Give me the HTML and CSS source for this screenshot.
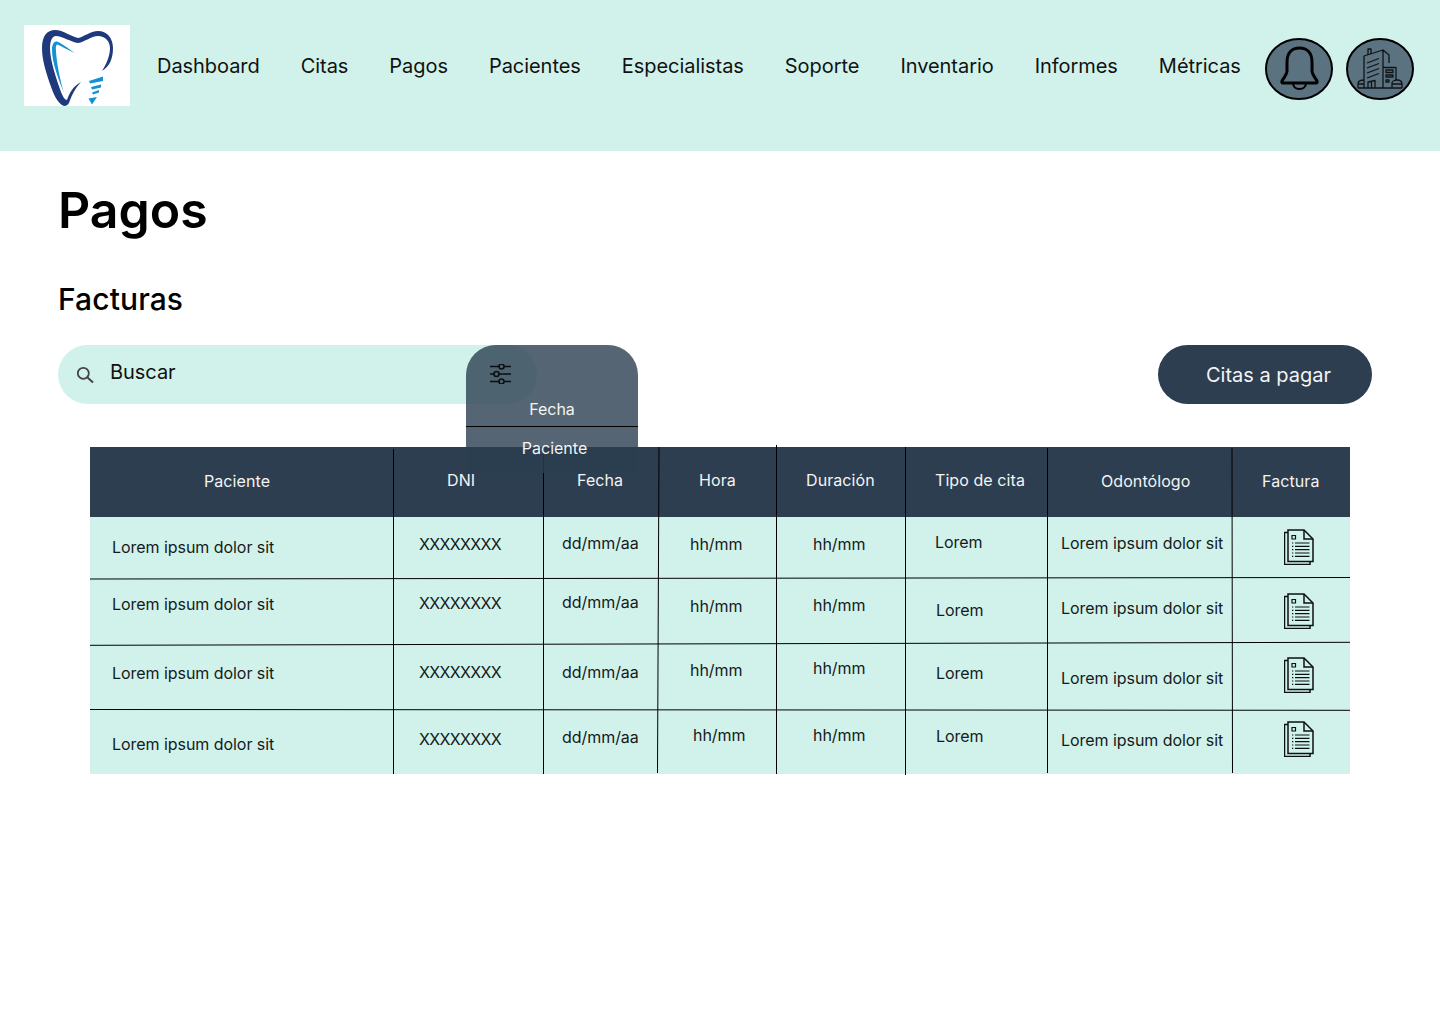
FILE: index.html
```html
<!DOCTYPE html>
<html lang="es">
<head>
<meta charset="utf-8">
<title>Pagos</title>
<link rel="stylesheet" href="styles.css">
</head>
<body>
<svg class="defs" width="0" height="0" aria-hidden="true">
  <symbol id="doc" viewBox="0 0 30 36">
    <path class="doc-line" d="M4 3.5H.5V35.5H26V32.5"/>
    <path class="doc-line" d="M4 1H20L29 10V32.5H4Z"/>
    <path class="doc-line" d="M20 1V10H29"/>
    <path class="doc-thin" d="M8 6.5H11.5V10H8ZM11 14H25.5M11 17.3H25.5M11 20.7H25.5M11 24H25.5M11 27.3H25.5M8 14H9.3M8 17.3H9.3M8 20.7H9.3M8 24H9.3M8 27.3H9.3"/>
  </symbol>
</svg>

<header class="topbar">
  <div class="logo">
    <svg viewBox="24 25 106 81" width="106" height="81" aria-hidden="true">
      <path class="logo-navy" d="M64 106C57 103 54 95 50 84C46 72 42 60 42 48C42 36 47 30 55 30C63 30 72 37 78 38C84 37 90 31 98 31C107 31 113 38 113 48C113 58 110 66 102 71C106 65 110 56 110 48C110 41 105 36 98 36C91 36 85 42 78 43C71 42 62 36 56 36C52 36 50 41 50 48C50 60 56 78 61 92C63 97 65 100 67 100C69 94 73 86 81 82C75 88 71 97 69 103C68 105 66 106 64 106Z"/>
      <path class="logo-blue" d="M64 93C58 78 52 62 52 50C52 44 54 41 57 41.5C63 44 70 50 75 53C68 50 62 46.500 57.500 44.500C56 44.500 55.500 47 56 51C56.500 62 60 80 64 93Z"/>
      <path class="logo-blue" d="M89 81L103 76.5V81L90 83.5ZM91 87L101 84.5V87.5L92 89.5ZM92 92.5L99 90V92.5L93 94.5ZM88.5 98.5L97 97L92 104.5Z"/>
    </svg>
  </div>
  <nav class="nav">
    <a>Dashboard</a><a>Citas</a><a>Pagos</a><a>Pacientes</a><a>Especialistas</a><a>Soporte</a><a>Inventario</a><a>Informes</a><a>Métricas</a>
  </nav>
  <div class="actions">
    <svg class="round" viewBox="0 0 68 62" width="68" height="62" aria-hidden="true">
      <ellipse class="round-bg" cx="34" cy="31" rx="33" ry="30"/>
      <path class="bell" d="M22 33V24C22 15 27 10 34.5 10C42 10 47 15 47 24V33C47 37 50 39 52 43C52.5 44.5 52 45 51 45H18C17 45 16.5 44.5 17 43C19 39 22 37 22 33Z"/>
      <path class="bell-thin" d="M28 45C28 49 31 51 34.5 51C38 51 41 49 41 45"/>
    </svg>
    <svg class="round" viewBox="0 0 68 62" width="68" height="62" aria-hidden="true">
      <ellipse class="round-bg" cx="34" cy="31" rx="33" ry="30"/>
      <path class="build" d="M18 50V18L37 12V50M37 12L43 17V25M22 17V11H25V16M21 25L33 20.5M21 30L33 25.5M21 35L33 30.5M21 40L33 35.5M22 50V44L29 42.5V50M25.5 43.5V50M37 29.5H50V42M40 32H47V34.5H40ZM40 37H47V39H40ZM40 42H43V44H40ZM12 50H56M12 50V46C12 43 15 42 18 42M12 46H18M46 50V45C46 43 49 42 51 42C54 42 56 43 56 46V50M46 46H56"/>
    </svg>
  </div>
</header>

<main class="page">
  <h1 class="title">Pagos</h1>
  <h2 class="subtitle">Facturas</h2>

  <div class="toolbar">
    <div class="search">
      <svg class="search-icon" viewBox="0 0 20 20" width="20" height="20" aria-hidden="true">
        <circle class="lens" cx="8.3" cy="8.3" r="5.5"/>
        <path class="lens-handle" d="M12.5 12.5L18 17.5"/>
      </svg>
      <span class="search-text">Buscar</span>
      <div class="filter-menu">
        <svg class="filter-icon" viewBox="0 0 24 20" width="24" height="20" aria-hidden="true">
          <path class="slider" d="M1 2.5H10M15 2.5H22M1 10H5M10 10H22M1 17.5H10M15 17.5H22"/>
          <circle class="slider" cx="12.5" cy="2.5" r="2.5"/>
          <circle class="slider" cx="7.5" cy="10" r="2.5"/>
          <circle class="slider" cx="12.5" cy="17.5" r="2.5"/>
        </svg>
        <div class="menu-item menu-first">Fecha</div>
        <div class="menu-item menu-second">Paciente</div>
      </div>
    </div>
    <a class="cta">Citas a pagar</a>
  </div>

  <section class="table">
    <div class="th th1">Paciente</div>
    <div class="th th2">DNI</div>
    <div class="th th3">Fecha</div>
    <div class="th th4">Hora</div>
    <div class="th th5">Duración</div>
    <div class="th th6">Tipo de cita</div>
    <div class="th th7">Odontólogo</div>
    <div class="th th8">Factura</div>

    <div class="td c1 y20">Lorem ipsum dolor sit</div>
    <div class="td c2 y17">XXXXXXXX</div>
    <div class="td c3 y16">dd/mm/aa</div>
    <div class="td c4 y17">hh/mm</div>
    <div class="td c5 y17">hh/mm</div>
    <div class="td c6 y15 shift-l">Lorem</div>
    <div class="td c7 y16">Lorem ipsum dolor sit</div>
    <div class="td c8 y13"><svg class="doc" width="30" height="36"><use href="#doc"/></svg></div>

    <div class="td c1 y15">Lorem ipsum dolor sit</div>
    <div class="td c2 y14">XXXXXXXX</div>
    <div class="td c3 y13">dd/mm/aa</div>
    <div class="td c4 y17">hh/mm</div>
    <div class="td c5 y16">hh/mm</div>
    <div class="td c6 y21">Lorem</div>
    <div class="td c7 y19">Lorem ipsum dolor sit</div>
    <div class="td c8 y15"><svg class="doc" width="30" height="36"><use href="#doc"/></svg></div>

    <div class="td c1 y18">Lorem ipsum dolor sit</div>
    <div class="td c2 y17">XXXXXXXX</div>
    <div class="td c3 y17">dd/mm/aa</div>
    <div class="td c4 y15">hh/mm</div>
    <div class="td c5 y13">hh/mm</div>
    <div class="td c6 y18">Lorem</div>
    <div class="td c7 y23">Lorem ipsum dolor sit</div>
    <div class="td c8 y13"><svg class="doc" width="30" height="36"><use href="#doc"/></svg></div>

    <div class="td c1 y24">Lorem ipsum dolor sit</div>
    <div class="td c2 y19">XXXXXXXX</div>
    <div class="td c3 y17">dd/mm/aa</div>
    <div class="td c4 y15 shift-r">hh/mm</div>
    <div class="td c5 y15">hh/mm</div>
    <div class="td c6 y16">Lorem</div>
    <div class="td c7 y20">Lorem ipsum dolor sit</div>
    <div class="td c8 y12"><svg class="doc" width="30" height="36"><use href="#doc"/></svg></div>

    <svg class="rules" viewBox="0 0 1260 327" aria-hidden="true">
      <path d="M303.5 2V327M453.5 0V327M569 0L567.5 326M686.5 -2V327M815.5 0V328M957.5 1V326M1142 1L1142.5 326"/>
      <path d="M0 132L1260 130.5M0 198.3L1260 195.3M0 262.5L1260 263.3"/>
    </svg>
  </section>
</main>
</body>
</html>
```
FILE: styles.css
```css
* { box-sizing: border-box; }

html, body { margin: 0; padding: 0; }

body {
  width: 1440px;
  min-height: 1024px;
  background: #fff;
  color: #000;
  font-family: Inter, "Liberation Sans", sans-serif;
}

.defs { position: absolute; }

/* top bar */
.topbar {
  height: 151px;
  background: #d1f2eb;
  display: flex;
  align-items: flex-start;
  padding: 25px 26px 0 24px;
}

.logo {
  width: 106px;
  height: 81px;
  background: #fff;
  flex: none;
}
.logo svg { display: block; }
.logo-navy { fill: #1f3a7c; }
.logo-blue { fill: #1391d2; }

.nav {
  display: flex;
  gap: 41px;
  margin-left: 27px;
  padding-top: 29px;
  font-size: 20px;
  line-height: 24px;
  letter-spacing: -0.05px;
  color: #111;
}

.actions {
  display: flex;
  gap: 13px;
  margin-left: auto;
  padding-top: 13px;
}
.round { display: block; }
.round-bg { fill: #5b7280; stroke: #000; stroke-width: 2; }
.bell { fill: none; stroke: #000; stroke-width: 3; stroke-linejoin: round; }
.bell-thin { fill: none; stroke: #000; stroke-width: 2; }
.build { fill: none; stroke: #101418; stroke-width: 1.3; stroke-linejoin: round; }

/* page */
.page { padding: 29px 0 0 58px; }

.title {
  margin: 0;
  font-size: 50px;
  line-height: 60px;
  font-weight: 600;
}

.subtitle {
  margin: 41px 0 0;
  font-size: 30px;
  line-height: 36px;
  font-weight: 500;
  letter-spacing: 0.1px;
}

.toolbar {
  display: flex;
  justify-content: space-between;
  margin-top: 28px;
  padding-right: 68px;
}

.search {
  position: relative;
  width: 479px;
  height: 59px;
  border-radius: 30px;
  background: #d1f2eb;
  display: flex;
  align-items: flex-start;
}
.search-icon { margin: 20px 0 0 17px; flex: none; }
.lens { fill: none; stroke: #444; stroke-width: 1.8; }
.lens-handle { fill: none; stroke: #444; stroke-width: 2; }
.search-text {
  margin: 15px 0 0 15px;
  font-size: 20px;
  line-height: 24px;
  letter-spacing: -0.05px;
  color: #111;
}

.filter-menu {
  position: absolute;
  z-index: 2;
  left: 408px;
  top: 0;
  width: 172px;
  height: 128px;
  border-radius: 30px 30px 0 0;
  background: rgba(44, 62, 80, 0.8);
  color: #f4f4f4;
  font-size: 16px;
  line-height: 20px;
  text-align: center;
}
.filter-icon { display: block; margin: 19px 0 0 23px; }
.slider { fill: none; stroke: #0b0f12; stroke-width: 1.6; }
.menu-item { height: 39px; }
.menu-first { padding-top: 15px; height: 43px; border-bottom: 1px solid #000; }
.menu-second { padding: 11px 0 0 5px; }

.cta {
  width: 214px;
  height: 59px;
  border-radius: 30px;
  background: #2c3e50;
  color: #f4f4f4;
  font-size: 20px;
  line-height: 60px;
  padding-left: 48px;
}

/* table */
.table {
  position: relative;
  margin: 43px 0 0 32px;
  width: 1260px;
  display: grid;
  grid-template-columns: 303px 150px 116px 117px 129px 142px 185px 118px;
  grid-template-rows: 70px 62px 66px 65px 64px;
  background: #d1f2eb;
  font-size: 16px;
  line-height: 20px;
  color: #151a1c;
}

.th {
  background: #2c3e50;
  color: #f4f4f4;
  font-weight: 400;
  letter-spacing: 0.08px;
  padding-top: 23px;
}
.th1 { padding-left: 114px; padding-top: 24px; }
.th2 { padding-left: 54px; }
.th3 { padding-left: 34px; }
.th4 { padding-left: 40px; }
.th5 { padding-left: 30px; }
.th6 { padding-left: 30px; }
.th7 { padding-left: 54px; padding-top: 24px; }
.th8 { padding-left: 30px; padding-top: 24px; }

.td { white-space: nowrap; letter-spacing: -0.05px; }
.c1 { padding-left: 22px; }
.c2 { padding-left: 26px; letter-spacing: -0.65px; }
.c3 { padding-left: 19px; }
.c4 { padding-left: 31px; }
.c5 { padding-left: 37px; }
.c6 { padding-left: 31px; }
.c7 { padding-left: 14px; }
.c8 { padding-left: 51px; }
.shift-l { padding-left: 30px; }
.shift-r { padding-left: 34px; }

.y12 { padding-top: 12px; }
.y13 { padding-top: 13px; }
.y14 { padding-top: 14px; }
.y15 { padding-top: 15px; }
.y16 { padding-top: 16px; }
.y17 { padding-top: 17px; }
.y18 { padding-top: 18px; }
.y19 { padding-top: 19px; }
.y20 { padding-top: 20px; }
.y21 { padding-top: 21px; }
.y23 { padding-top: 23px; }
.y24 { padding-top: 24px; }

.doc { display: block; margin: -1px 0 0 1px; }
.doc-line { fill: none; stroke: #0d1113; stroke-width: 1.5; }
.doc-thin { fill: none; stroke: #0d1113; stroke-width: 1.2; }

.rules {
  position: absolute;
  left: 0;
  top: 0;
  width: 1260px;
  height: 327px;
  overflow: visible;
  pointer-events: none;
}
.rules path { fill: none; stroke: #000; stroke-width: 1; }
```
